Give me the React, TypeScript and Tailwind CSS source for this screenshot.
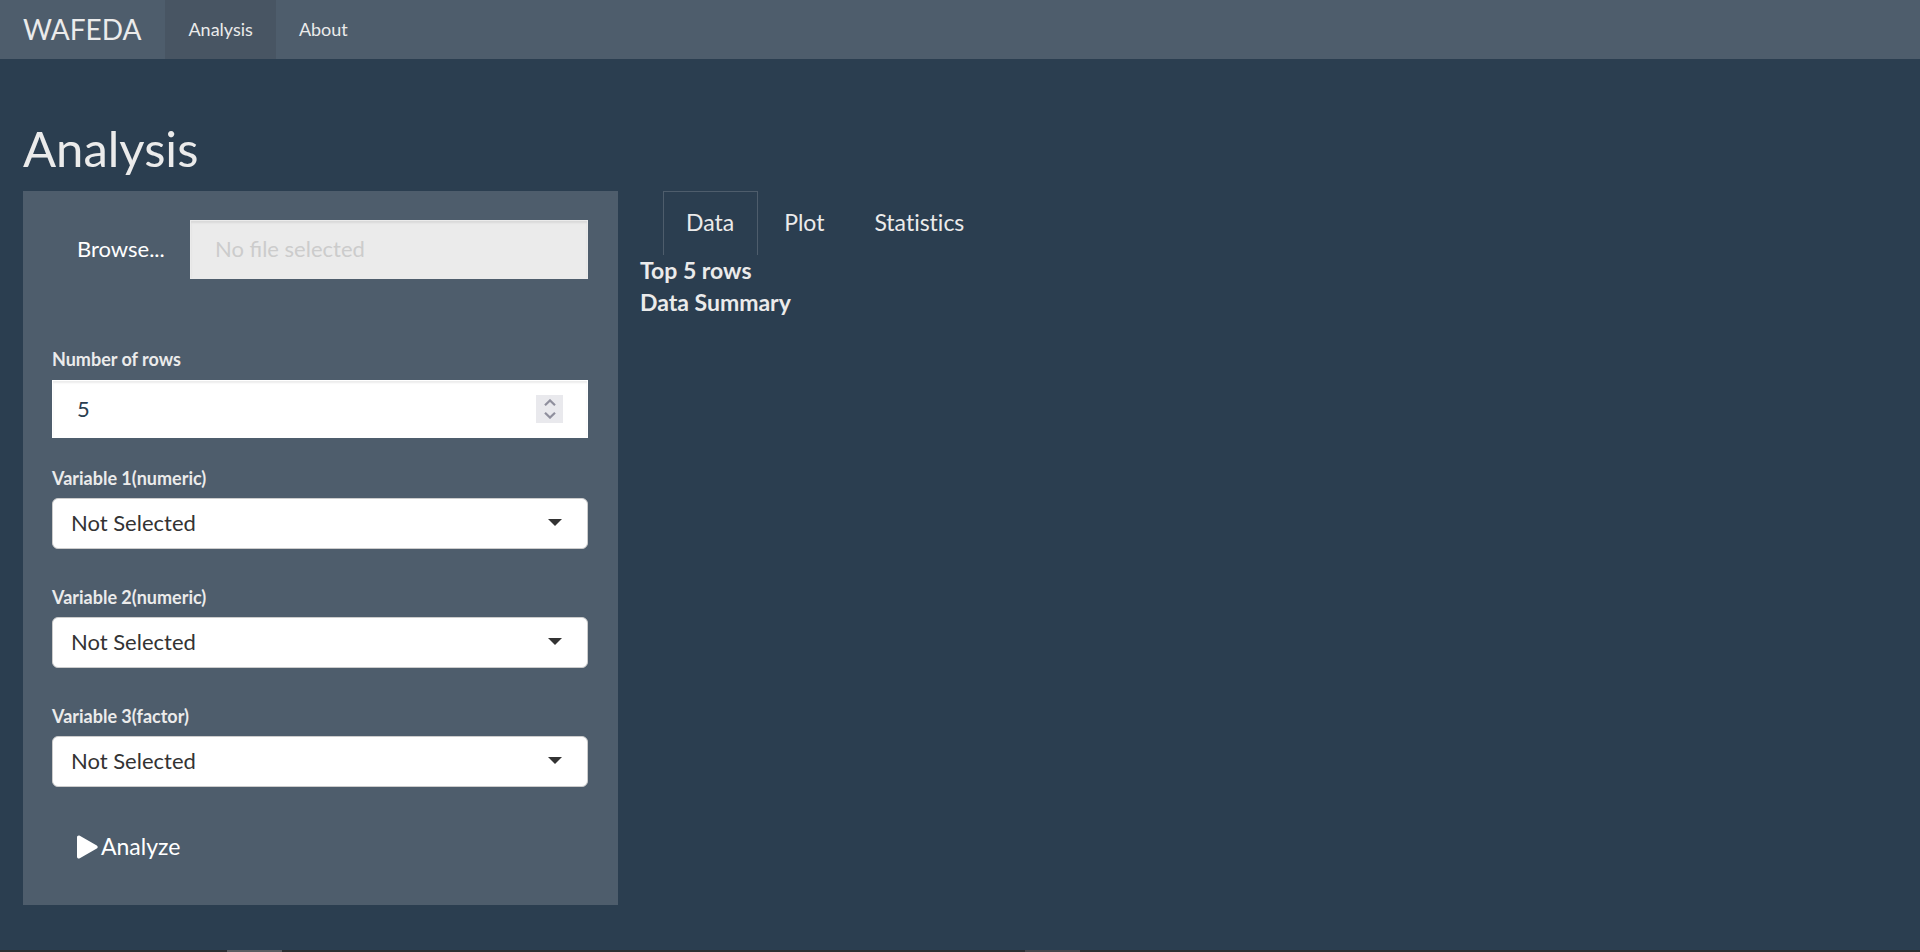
import { useRef, useState } from 'react';

const tabs = ['Data', 'Plot', 'Statistics'];

const variables = [
  { id: 'var1', label: 'Variable 1(numeric)' },
  { id: 'var2', label: 'Variable 2(numeric)' },
  { id: 'var3', label: 'Variable 3(factor)' },
];

function Navbar() {
  return (
    <nav className="flex h-[59px] bg-[#4e5d6c] text-lg">
      <a href="#home" className="flex items-center pr-6 pl-[23px] text-[28px]">
        WAFEDA
      </a>
      <a href="#analysis" aria-current="page" className="flex items-center bg-[#485563] px-[23px] pb-[2px]">
        Analysis
      </a>
      <a href="#about" className="flex items-center px-[23px] pb-[2px]">
        About
      </a>
    </nav>
  );
}

function FilePicker() {
  const fileInput = useRef<HTMLInputElement>(null);
  const [fileName, setFileName] = useState('');

  return (
    <div className="flex h-[59px]">
      <button
        type="button"
        onClick={() => fileInput.current?.click()}
        className="w-[138px] shrink-0 pb-[2px] pl-[25px] text-left text-white"
      >
        Browse...
      </button>
      <input
        ref={fileInput}
        type="file"
        aria-label="Data file"
        className="hidden"
        onChange={(e) => setFileName(e.target.files?.[0]?.name ?? '')}
      />
      <input
        type="text"
        readOnly
        aria-label="Selected file"
        placeholder="No file selected"
        value={fileName}
        className="min-w-0 flex-1 border border-[#ebebeb] bg-[#ebebeb] px-6 pb-[2px] text-[#2b3e50] shadow-[inset_0_2px_2px_rgba(0,0,0,0.075)] outline-none placeholder:text-[#cccccc]"
      />
    </div>
  );
}

function RowCount() {
  const [rows, setRows] = useState(5);

  return (
    <div>
      <label htmlFor="rows" className="block pb-2 text-lg leading-[26px] font-bold">
        Number of rows
      </label>
      <div className="flex h-[58px] items-center border border-white bg-white px-6 shadow-[inset_0_2px_2px_rgba(0,0,0,0.075)]">
        <input
          id="rows"
          type="number"
          value={rows}
          onChange={(e) => setRows(Number(e.target.value))}
          className="min-w-0 flex-1 bg-transparent pb-[2px] text-[#2b3e50] outline-none [appearance:textfield] [&::-webkit-inner-spin-button]:appearance-none"
        />
        <div className="flex h-7 w-[27px] flex-col bg-[#e9e9ed]">
          <button
            type="button"
            aria-label="More rows"
            onClick={() => setRows(rows + 1)}
            className="flex flex-1 items-end justify-center pb-[3px]"
          >
            <svg width="12" height="7" viewBox="0 0 12 7" fill="none" stroke="#8f8f9d" strokeWidth="2.2">
              <path d="M1 6.2 6 1.4l5 4.8" />
            </svg>
          </button>
          <button
            type="button"
            aria-label="Fewer rows"
            onClick={() => setRows(rows - 1)}
            className="flex flex-1 items-start justify-center pt-[3px]"
          >
            <svg width="12" height="7" viewBox="0 0 12 7" fill="none" stroke="#8f8f9d" strokeWidth="2.2">
              <path d="M1 .8l5 4.8 5-4.8" />
            </svg>
          </button>
        </div>
      </div>
    </div>
  );
}

function VariableSelect({ id, label }: { id: string; label: string }) {
  return (
    <div>
      <label htmlFor={id} className="block pb-[7px] text-lg leading-[26px] font-bold">
        {label}
      </label>
      <div className="relative">
        <select
          id={id}
          className="block h-[51px] w-full appearance-none rounded-md border border-[#cccccc] bg-white pr-12 pb-[2px] pl-[18px] text-[#333333]"
        >
          <option>Not Selected</option>
        </select>
        <svg
          width="14"
          height="7"
          viewBox="0 0 14 7"
          className="pointer-events-none absolute top-[21px] right-[26px]"
        >
          <path d="M0 0h14L7 7z" fill="#333333" />
        </svg>
      </div>
    </div>
  );
}

function Sidebar() {
  return (
    <form
      className="bg-[#4e5d6c] py-[29px] pr-[30px] pl-[29px] text-[22px]"
      onSubmit={(e) => e.preventDefault()}
    >
      <FilePicker />
      <div className="mt-[67px] flex flex-col gap-[27px]">
        <RowCount />
        <div className="flex flex-col gap-[35px]">
          {variables.map((v) => (
            <VariableSelect key={v.id} id={v.id} label={v.label} />
          ))}
        </div>
      </div>
      <button type="submit" className="mt-[30px] flex h-[59px] items-center gap-[3px] px-[25px] text-[23px] text-white">
        <svg width="21" height="24" viewBox="0 0 21 24" fill="currentColor">
          <path d="M0 2.2v19.6c0 1.5 1.5 2.3 2.8 1.5l17-9.7c1.2-.7 1.2-2.5 0-3.2L2.8.7C1.5-.1 0 .7 0 2.2z" />
        </svg>
        Analyze
      </button>
    </form>
  );
}

function Results() {
  const [active, setActive] = useState('Data');

  return (
    <section>
      <div role="tablist" className="flex h-16 gap-[3px] pl-[23px] [font-variant-ligatures:none]">
        {tabs.map((tab) => (
          <button
            key={tab}
            type="button"
            role="tab"
            aria-selected={tab === active}
            onClick={() => setActive(tab)}
            className={
              tab === active
                ? 'border border-b-0 border-[#4e5d6c] pr-[23px] pb-[2px] pl-[22px]'
                : 'border border-b-0 border-transparent pr-[23px] pb-[2px] pl-[22px]'
            }
          >
            {tab}
          </button>
        ))}
      </div>
      <div role="tabpanel" className="-mt-px leading-8 font-bold">
        <h2>Top 5 rows</h2>
        <h2>Data Summary</h2>
      </div>
    </section>
  );
}

export default function App() {
  return (
    <div className="flex min-h-screen flex-col bg-[#2b3e50] font-['Lato',sans-serif] text-[23px] text-[#ebebeb]">
      <Navbar />
      <main className="flex-1 pt-[60px]">
        <h1 className="px-[23px] text-[49px] leading-[58px]">Analysis</h1>
        <div className="mt-[14px] grid grid-cols-3">
          <div className="pr-[22px] pl-[23px]">
            <Sidebar />
          </div>
          <div className="col-span-2">
            <Results />
          </div>
        </div>
      </main>
      <footer className="flex h-[2px] bg-[#2b2e31]">
        <div className="ml-[227px] w-[55px] bg-[#5c5d62]" />
        <div className="ml-[743px] w-[55px] bg-[#46474c]" />
      </footer>
    </div>
  );
}
